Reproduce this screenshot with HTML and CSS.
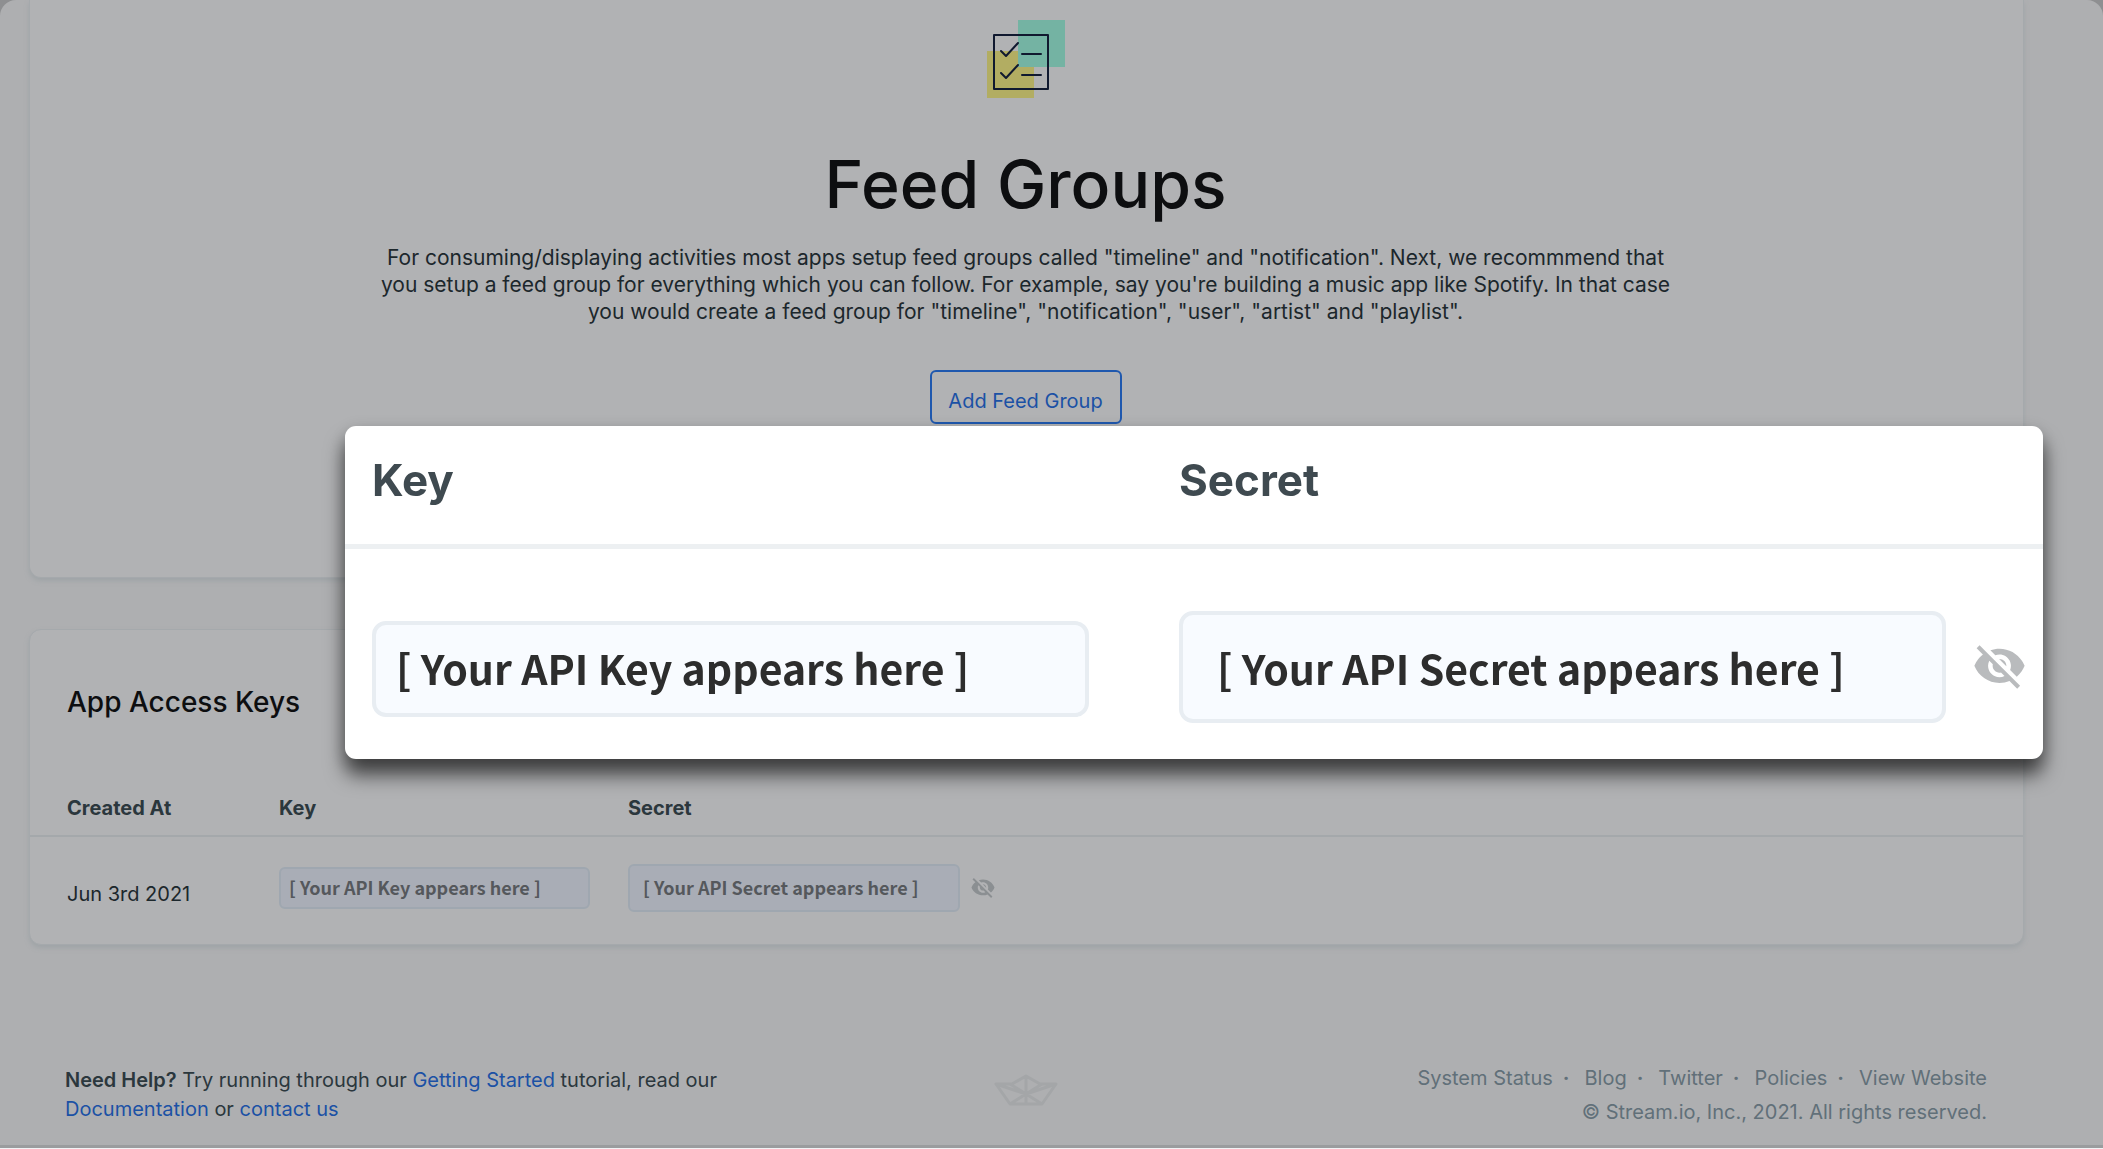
FILE: index.html
```html
<!DOCTYPE html>
<html lang="en">
<head>
<meta charset="utf-8">
<title>Feed Groups</title>
<link rel="stylesheet" href="styles.css">
</head>
<body>
<svg class="defs" width="0" height="0" aria-hidden="true">
  <symbol id="eye-off" viewBox="1 2 22 21">
    <path d="M12 7c2.760 0 5 2.240 5 5 0 .65-.13 1.260-.36 1.830l2.920 2.920c1.510-1.260 2.700-2.890 3.430-4.750-1.730-4.390-6-7.500-11-7.500-1.400 0-2.740.25-3.980.7l2.160 2.160C10.740 7.130 11.350 7 12 7zM2 4.270l2.280 2.280.46.46C3.080 8.300 1.780 10.020 1 12c1.730 4.390 6 7.500 11 7.500 1.550 0 3.030-.3 4.380-.84l.42.42L19.730 22 21 20.730 3.270 3 2 4.270zM7.530 9.800l1.550 1.550c-.05.21-.08.43-.08.65 0 1.660 1.340 3 3 3 .22 0 .44-.03.65-.08l1.550 1.550c-.67.33-1.410.53-2.200.53-2.760 0-5-2.240-5-5 0-.79.2-1.530.53-2.200zm4.310-.78l3.150 3.150.02-.16c0-1.660-1.340-3-3-3l-.17.010z"/>
  </symbol>
</svg>
<div class="page">
  <main>
    <section class="card intro">
      <svg class="intro-icon" viewBox="0 0 80 80" aria-hidden="true">
        <rect x="1" y="31" width="47" height="47" fill="#b2ad62"/>
        <rect x="32" y="0" width="47" height="47" fill="#74b3a3"/>
        <g fill="none" stroke="#10192f" stroke-width="2" stroke-linecap="round" stroke-linejoin="round">
          <rect x="8" y="15" width="54" height="54"/>
          <path d="M15 31l5 5 12-13M15 53l5 5 12-13M36 34h19M36 55h19"/>
        </g>
      </svg>
      <h1>Feed Groups</h1>
      <p>For consuming/displaying activities most apps setup feed groups called "timeline" and "notification". Next, we recommmend that<br>you setup a feed group for everything which you can follow. For example, say you're building a music app like Spotify. In that case<br>you would create a feed group for "timeline", "notification", "user", "artist" and "playlist".</p>
      <button type="button" class="add">Add Feed Group</button>
    </section>
    <section class="card keys">
      <h2>App Access Keys</h2>
      <table>
        <thead><tr><th class="c-date">Created At</th><th class="c-key">Key</th><th>Secret</th></tr></thead>
        <tbody><tr>
          <td>Jun 3rd 2021</td>
          <td><input class="field key" type="text" aria-label="Key" readonly value="[ Your API Key appears here ]"></td>
          <td><div class="secret-row"><input class="field secret" type="text" aria-label="Secret" readonly value="[ Your API Secret appears here ]"><button type="button" class="eye" aria-label="Show secret"><svg><use href="#eye-off"/></svg></button></div></td>
        </tr></tbody>
      </table>
    </section>
  </main>
  <footer>
    <p class="help"><b>Need Help?</b> Try running through our <a href="#">Getting Started</a> tutorial, read our<br><a href="#">Documentation</a> or <a href="#">contact us</a></p>
    <svg class="boat" viewBox="0 0 64 32" aria-hidden="true">
      <path d="M2 10L18 10L32 2L46 10L62 10L48 30H16ZM16 30L48 10M48 30L16 10M32 2V30M2 10L32 20L62 10" fill="none" stroke="#a4a6a8" stroke-width="3" stroke-linejoin="round"/>
    </svg>
    <div class="legal">
      <nav><a href="#">System Status</a><i>·</i><a href="#">Blog</a><i>·</i><a href="#">Twitter</a><i>·</i><a href="#">Policies</a><i>·</i><a href="#">View Website</a></nav>
      <p>© Stream.io, Inc., 2021. All rights reserved.</p>
    </div>
  </footer>
</div>
<div class="callout" role="dialog" aria-label="API credentials">
  <div class="callout-head"><label for="k">Key</label><label for="s">Secret</label></div>
  <div class="callout-body">
    <input id="k" class="big key" type="text" readonly value="[ Your API Key appears here ]">
    <div class="secret-row"><input id="s" class="big secret" type="text" readonly value="[ Your API Secret appears here ]"><button type="button" class="eye" aria-label="Show secret"><svg><use href="#eye-off"/></svg></button></div>
  </div>
</div>
</body>
</html>
```
FILE: styles.css
```css
* { box-sizing: border-box; }
html { background: #f1f3f5; }
body { margin: 0; background: linear-gradient(#8e8f91 40px, #f1f3f5 40px); font-family: Inter, "Liberation Sans", sans-serif; font-size: 21px; color: #1c272c; }
h1, h2, p { margin: 0; font-weight: 400; }
button { font: inherit; background: none; cursor: pointer; }
a { color: #1b51a5; text-decoration: none; }
b { font-weight: 600; }
.defs { display: block; }
.page { min-height: calc(100vh - 1px); background: #aeafb1; border-bottom: 3px solid #9a9c9e; border-radius: 16px 16px 0 0; padding: 0 79px 0 29px; }
.card { background: #b1b2b4; border: 1px solid #a5a9ac; border-radius: 12px; box-shadow: 0 3px 5px #9fa4a7; }
.intro { border-top: 0; border-radius: 0 0 12px 12px; height: 578px; padding: 20px 2px 0 0; display: flex; flex-direction: column; align-items: center; text-align: center; }
.intro-icon { width: 80px; height: 80px; }
h1 { margin-top: 44px; font-size: 66px; font-weight: 500; line-height: 80px; color: #0d0e10; }
.intro p { margin-top: 20px; line-height: 27px; }
.add { margin-top: 45px; width: 192px; height: 54px; padding: 8px 0 0; border: 2px solid #1f58ae; border-radius: 6px; color: #1b51a5; font-size: 20px; }
.keys { margin-top: 51px; }
h2 { padding: 54px 37px 60px; font-size: 28px; font-weight: 500; line-height: 36px; color: #0d0e10; }
table { width: 100%; border-collapse: collapse; text-align: left; table-layout: fixed; font-size: 20px; }
th { height: 56px; padding: 0; border-bottom: 2px solid #a4a8ab; color: #2b373d; font-weight: 700; }
td { height: 108px; padding: 0 0 6px; }
th:first-child, td:first-child { padding-left: 37px; }
td:first-child { padding-top: 12px; }
.c-date { width: 249px; }
.c-key { width: 349px; }
.secret-row { display: flex; align-items: center; }
.field, .big { font-family: "Noto Sans CJK SC", sans-serif; font-weight: 600; }
.field { font-size: 18px; color: #55585c; background: #a9adb6; border: 2px solid #9fa7b0; border-radius: 6px; display: block; }
.field.key { width: 311px; height: 42px; padding: 0 8px 2px; }
.field.secret { width: 332px; height: 48px; padding: 0 13px 2px; }
.eye { border: 0; padding: 0; color: #8b8f92; }
.eye svg { display: block; width: 24px; height: 22px; fill: currentColor; }
.field + .eye { margin-left: 11px; }
footer { display: grid; grid-template-columns: 1fr 64px 1fr; margin-top: 116px; padding: 0 37px 16px 36px; font-size: 20px; }
.help { line-height: 29px; padding-top: 5px; color: #2b373d; }
.boat { width: 64px; height: 32px; margin-top: 13px; }
.legal { text-align: right; line-height: 34px; color: #617079; }
.legal a { color: inherit; }
.legal i { margin: 0 15px 0 10px; font-style: normal; font-weight: 700; }
.callout { position: fixed; left: 345px; right: 60px; top: 426px; background: #fff; border-radius: 11px; box-shadow: 0 16px 20px rgba(0, 0, 0, .6), 0 6px 18px rgba(0, 0, 0, .2); }
.callout-head, .callout-body { display: grid; grid-template-columns: 807px 1fr; padding-left: 27px; align-items: center; }
.callout-head { height: 123px; padding-bottom: 11px; border-bottom: 5px solid #edf0f2; font-size: 44px; font-weight: 700; color: #3f4a50; }
.callout-body { height: 210px; padding-top: 25px; }
.big { font-size: 41px; color: #2d2d2d; background: #f8fbff; border: 4px solid #e8edf2; border-radius: 14px; }
.big.key { width: 717px; height: 96px; padding: 0 20px 4px; }
.big.secret { width: 767px; height: 112px; padding: 0 34px; }
.big + .eye { margin-left: 28px; color: #b9bbbd; }
.big + .eye svg { width: 51px; height: 48px; }
.callout-body > .big { margin-top: 4px; }
```
